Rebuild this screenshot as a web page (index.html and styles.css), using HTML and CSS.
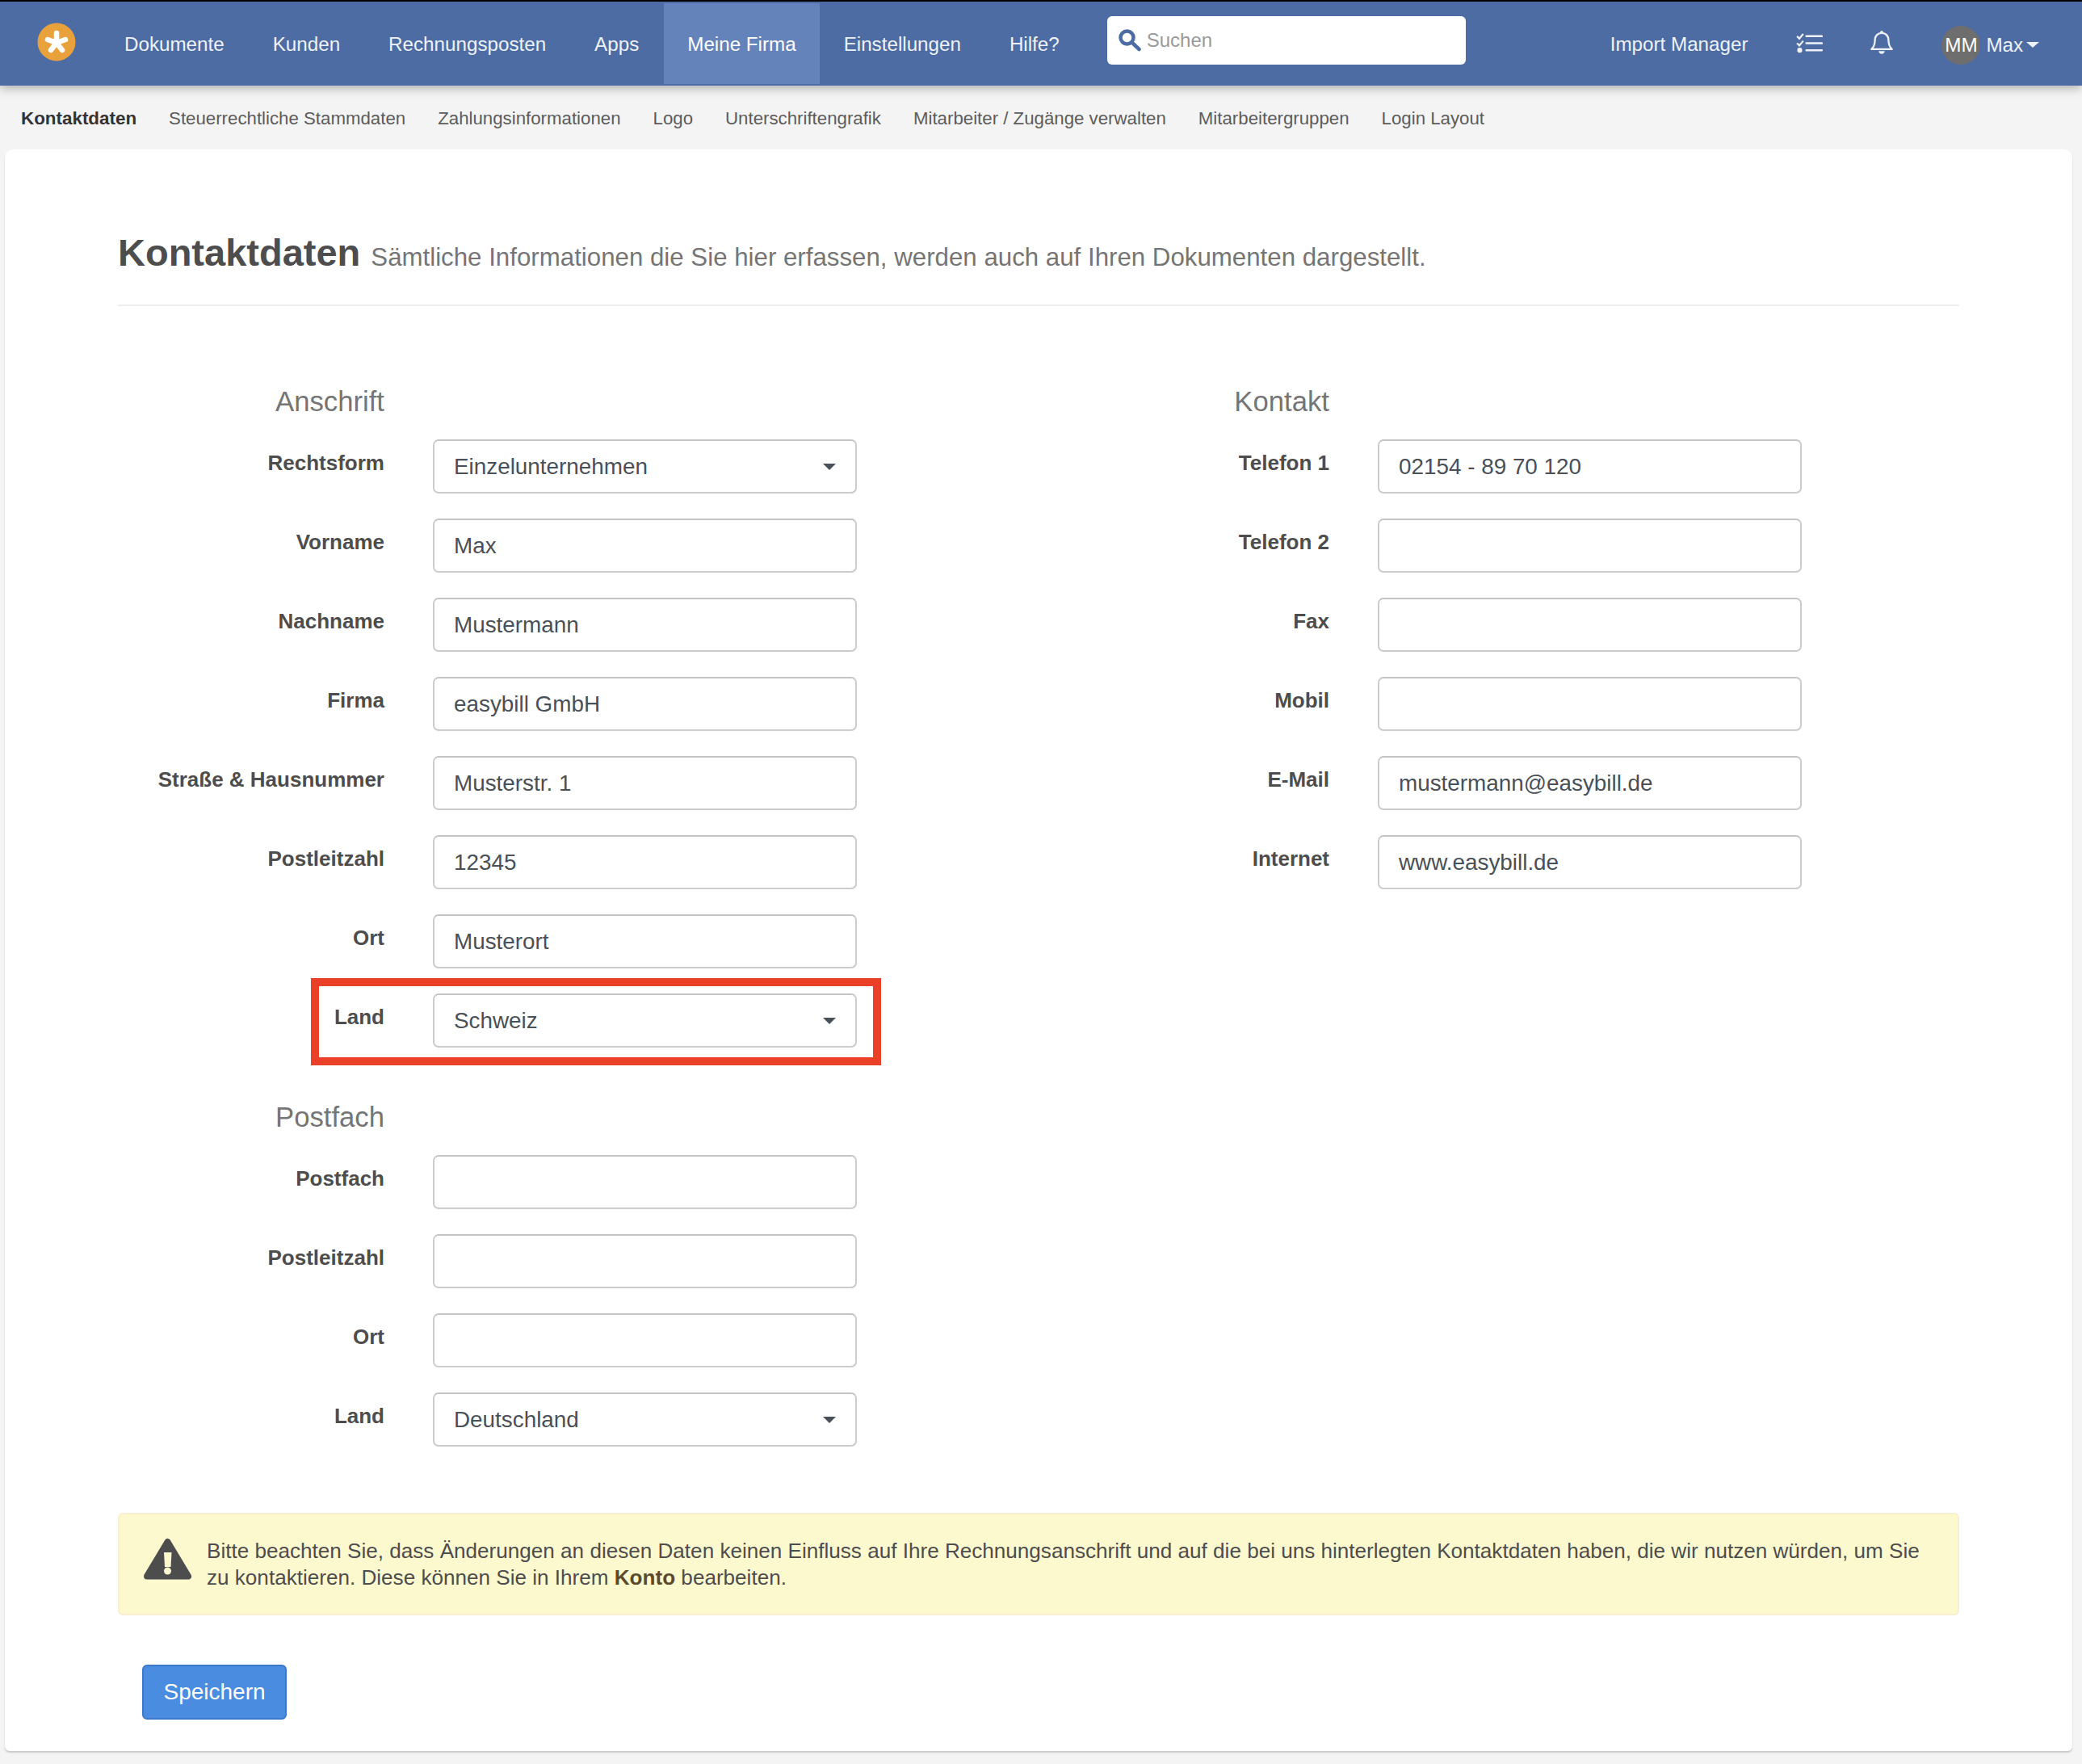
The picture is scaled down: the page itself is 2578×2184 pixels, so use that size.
FILE: index.html
```html
<!DOCTYPE html>
<html lang="de">
<head>
    <meta charset="UTF-8">
    <title>Kontaktdaten</title>
    <link rel="stylesheet" href="styles.css">
</head>
<body>
    <!-- Top navigation -->
    <header class="topbar">
        <div class="logo">
            <svg viewBox="0 0 48 48" width="48" height="48">
                <circle cx="24" cy="24" r="23.500" fill="#e9a23b"/>
                <path d="M24 25V13M24 25L35 21M24 25L13 21M24 25L31 34M24 25L17 34" stroke="#fff" stroke-width="6.500" stroke-linecap="round" fill="none"/>
            </svg>
        </div>
        <nav class="main-nav">
            <a>Dokumente</a>
            <a>Kunden</a>
            <a>Rechnungsposten</a>
            <a>Apps</a>
            <a class="active">Meine Firma</a>
            <a>Einstellungen</a>
            <a>Hilfe?</a>
        </nav>
        <div class="search">
            <svg viewBox="0 0 28 28" width="28" height="28">
                <circle cx="10.500" cy="10.500" r="8" fill="none" stroke="#4d6ca3" stroke-width="4.500"/>
                <path d="M17 17l8.500 8" stroke="#4d6ca3" stroke-width="4.500" stroke-linecap="round"/>
            </svg>
            <span>Suchen</span>
        </div>
        <div class="top-right">
            <a class="import">Import Manager</a>
            <svg class="tasks" viewBox="0 0 34 26" width="33" height="25">
                <path d="M1 4l3 3 5-6M1 13l3 3 5-6" fill="none" stroke="#eef2f8" stroke-width="2.400"/>
                <circle cx="4.500" cy="22" r="3.200" fill="#eef2f8"/>
                <path d="M13 4h20M13 13h20M13 22h20" stroke="#eef2f8" stroke-width="2.600" stroke-linecap="round"/>
            </svg>
            <svg class="bell" viewBox="0 0 30 34" width="28" height="32">
                <path d="M15 4c-5.500 0-9 4-9 9.500 0 7-2 9-4.500 12h27c-2.500-3-4.500-5-4.500-12C24 8 20.500 4 15 4z" fill="none" stroke="#eef2f8" stroke-width="2.500" stroke-linejoin="round"/>
                <circle cx="15" cy="3" r="2" fill="#eef2f8"/>
                <path d="M11 28h8c0 5-8 5-8 0z" fill="#eef2f8"/>
            </svg>
            <div class="user">
                <span class="avatar">MM</span>
                <span class="user-name">Max</span>
                <span class="user-caret"></span>
            </div>
        </div>
    </header>

    <!-- Sub navigation -->
    <nav class="sub-nav">
        <a class="active">Kontaktdaten</a>
        <a>Steuerrechtliche Stammdaten</a>
        <a>Zahlungsinformationen</a>
        <a>Logo</a>
        <a>Unterschriftengrafik</a>
        <a>Mitarbeiter / Zugänge verwalten</a>
        <a>Mitarbeitergruppen</a>
        <a>Login Layout</a>
    </nav>

    <main class="card">
        <div class="page-head">
            <h1>Kontaktdaten</h1>
            <small>Sämtliche Informationen die Sie hier erfassen, werden auch auf Ihren Dokumenten dargestellt.</small>
        </div>

        <div class="form-columns">
            <section class="col">
                <h2>Anschrift</h2>
                <div class="row"><label>Rechtsform</label><div class="field select">Einzelunternehmen</div></div>
                <div class="row"><label>Vorname</label><div class="field">Max</div></div>
                <div class="row"><label>Nachname</label><div class="field">Mustermann</div></div>
                <div class="row"><label>Firma</label><div class="field">easybill GmbH</div></div>
                <div class="row"><label>Straße &amp; Hausnummer</label><div class="field">Musterstr. 1</div></div>
                <div class="row"><label>Postleitzahl</label><div class="field">12345</div></div>
                <div class="row"><label>Ort</label><div class="field">Musterort</div></div>
                <div class="row highlighted"><label>Land</label><div class="field select">Schweiz</div></div>

                <h2 class="second">Postfach</h2>
                <div class="row"><label>Postfach</label><div class="field"></div></div>
                <div class="row"><label>Postleitzahl</label><div class="field"></div></div>
                <div class="row"><label>Ort</label><div class="field"></div></div>
                <div class="row"><label>Land</label><div class="field select">Deutschland</div></div>
            </section>

            <section class="col col-right">
                <h2>Kontakt</h2>
                <div class="row"><label>Telefon 1</label><div class="field">02154 - 89 70 120</div></div>
                <div class="row"><label>Telefon 2</label><div class="field"></div></div>
                <div class="row"><label>Fax</label><div class="field"></div></div>
                <div class="row"><label>Mobil</label><div class="field"></div></div>
                <div class="row"><label>E-Mail</label><div class="field">mustermann@easybill.de</div></div>
                <div class="row"><label>Internet</label><div class="field">www.easybill.de</div></div>
            </section>
        </div>

        <div class="alert">
            <svg viewBox="0 0 59 52" width="59" height="52">
                <path d="M29.500 5L55 47.500H4z" fill="#4d4d4d" stroke="#4d4d4d" stroke-width="8" stroke-linejoin="round"/>
                <path d="M25 18h9.500l-1 18h-7.500z" fill="#fdf9cf"/>
                <circle cx="29.500" cy="41" r="4.500" fill="#fdf9cf"/>
            </svg>
            <p>Bitte beachten Sie, dass Änderungen an diesen Daten keinen Einfluss auf Ihre Rechnungsanschrift und auf die bei uns hinterlegten Kontaktdaten haben, die wir nutzen würden, um Sie zu kontaktieren. Diese können Sie in Ihrem <b>Konto</b> bearbeiten.</p>
        </div>

        <button class="save">Speichern</button>
    </main>
</body>
</html>
```

FILE: styles.css
```css
* {
    box-sizing: border-box;
}
body {
    margin: 0;
    height: 2184px;
    background-color: #f4f4f4;
    border-top: 2px solid #000;
    font-family: "Liberation Sans", Arial, sans-serif;
    color: #4d4d4d;
    overflow: hidden;
}

/* Top bar */
.topbar {
    display: flex;
    align-items: center;
    height: 104px;
    background-color: #4d6ca3;
    box-shadow: 0 3px 12px rgba(0, 0, 0, 0.3);
    position: relative;
    padding-left: 46px;
    color: #eef2f8;
    font-size: 24.200px;
}
.logo {
    display: flex;
    margin-right: 30px;
    margin-top: -4px;
}
.main-nav {
    display: flex;
    align-self: stretch;
    padding: 2px 0;
}
.main-nav a {
    display: flex;
    align-items: center;
    padding: 2px 30px 0;
}
.main-nav a.active {
    margin-left: 1px;
    padding: 2px 29px 0;
    background-color: #6483ba;
    color: #fff;
}
.search {
    display: flex;
    align-items: center;
    gap: 7px;
    width: 444px;
    height: 60px;
    margin: -8px 0 0 29px;
    padding-left: 14px;
    background-color: #fff;
    border-radius: 6px;
    color: #999;
    font-size: 24px;
}
.top-right {
    display: flex;
    align-items: center;
    margin-left: 179px;
}
.import {
    padding-top: 2px;
}
.tasks {
    margin: -2px 0 0 60px;
}
.bell {
    margin: -2px 0 0 59px;
}
.user {
    display: flex;
    align-items: center;
    margin: 4px 0 0 60px;
}
.avatar {
    display: flex;
    align-items: center;
    justify-content: center;
    width: 48px;
    height: 48px;
    border-radius: 50%;
    background-color: #6e6e6e;
    color: #fff;
}
.user-name {
    margin-left: 7px;
}
.user-caret {
    margin-left: 4px;
    margin-top: -2px;
    border-top: 7px solid #eef2f8;
    border-left: 8px solid transparent;
    border-right: 8px solid transparent;
}

/* Sub navigation */
.sub-nav {
    display: flex;
    align-items: center;
    gap: 40px;
    height: 79px;
    padding: 2px 0 0 26px;
    font-size: 22.250px;
    color: #5c5c5c;
}
.sub-nav a.active {
    font-size: 22.400px;
    font-weight: bold;
    color: #333;
}

/* Card */
.card {
    margin: 0 12px 0 6px;
    height: 1983px;
    padding: 0 140px;
    background-color: #fff;
    border-radius: 10px 10px 6px 6px;
    box-shadow: 0 2px 2px rgba(0, 0, 0, 0.18);
}
.page-head {
    height: 194px;
    padding-top: 100px;
    border-bottom: 2px solid #eeeeee;
    display: flex;
    align-items: baseline;
    gap: 13px;
}
h1 {
    margin: 0;
    font-size: 47px;
    line-height: 56px;
    color: #4d4d4d;
}
.page-head small {
    font-size: 31.250px;
    color: #757575;
}

/* Form */
.form-columns {
    display: grid;
    grid-template-columns: 1140px 1140px;
    padding-top: 93px;
}
.col-right {
    padding-left: 30px;
}
h2 {
    margin: 0 0 22px;
    width: 330px;
    text-align: right;
    font-size: 34.700px;
    font-weight: normal;
    line-height: 50px;
    color: #757575;
}
h2.second {
    margin: 61px 0 22px;
}
.row {
    display: flex;
    gap: 60px;
    margin-bottom: 31px;
    position: relative;
}
.row label {
    width: 330px;
    padding-top: 14px;
    text-align: right;
    font-size: 26px;
    font-weight: bold;
    color: #4d4d4d;
}
.field {
    position: relative;
    display: flex;
    align-items: center;
    width: 525px;
    height: 67px;
    padding: 0 24px;
    background-color: #fff;
    border: 2px solid #ccc;
    border-top-color: #c4c4c4;
    border-radius: 7px;
    font-size: 27.850px;
    color: #495057;
}
.select::after {
    content: "";
    position: absolute;
    right: 24px;
    top: 28px;
    border-top: 8px solid #495057;
    border-left: 8px solid transparent;
    border-right: 8px solid transparent;
}
/* red marker drawn over the screenshot */
.highlighted::after {
    content: "";
    box-sizing: border-box;
    position: absolute;
    left: 239px;
    top: -19px;
    width: 706px;
    height: 108px;
    border: 10px solid #ea4027;
}

/* Alert */
.alert {
    display: flex;
    align-items: center;
    gap: 19px;
    height: 127px;
    margin-top: 51px;
    padding: 0 30px;
    background-color: #fdf9cf;
    border: 2px solid #f8eed0;
    border-radius: 6px;
}
.alert p {
    margin: 0;
    font-size: 26.100px;
    line-height: 32.500px;
    color: #4d4d4d;
}
.alert b {
    color: #5b4a2c;
}
.alert svg {
    flex-shrink: 0;
    margin-top: -13px;
}

/* Save button */
.save {
    display: block;
    width: 179px;
    height: 68px;
    margin: 61px 0 0 30px;
    background-color: #4a8ce0;
    border: 2px solid #3b78cc;
    border-radius: 6px;
    color: #fff;
    font-family: inherit;
    font-size: 28px;
}
```
